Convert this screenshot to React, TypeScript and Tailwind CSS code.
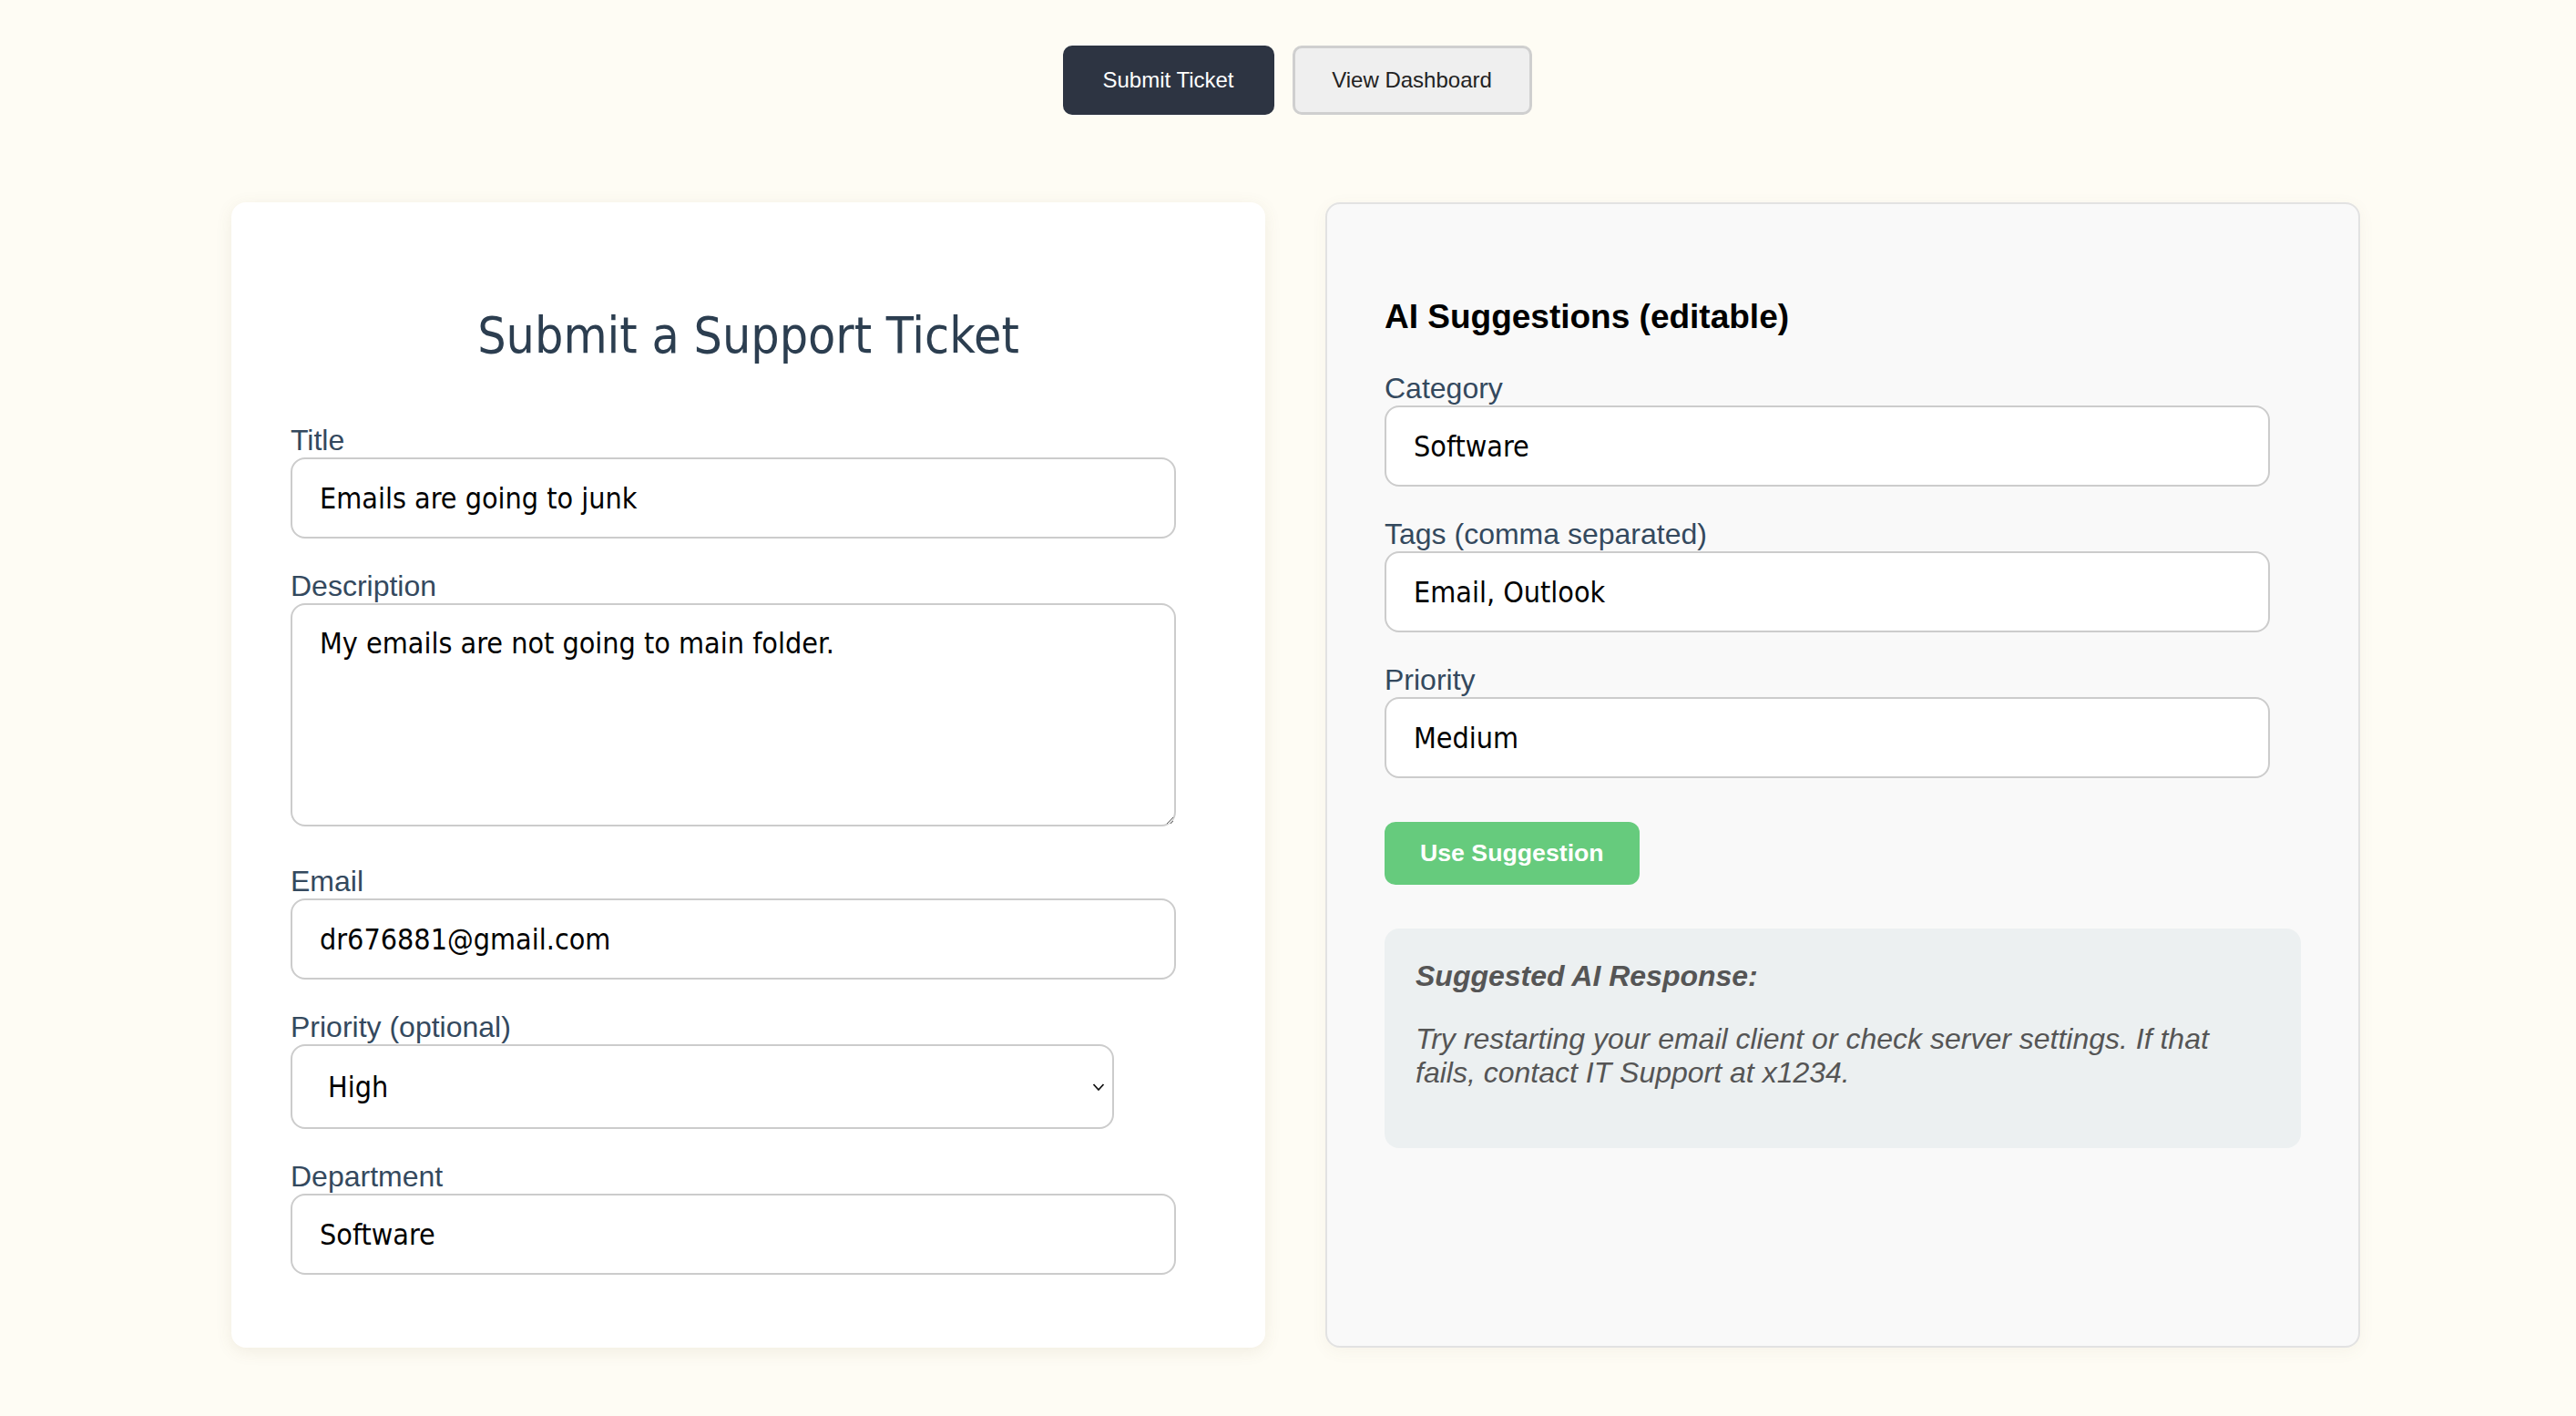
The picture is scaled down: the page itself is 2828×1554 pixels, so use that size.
const sans = "font-['Liberation_Sans',Arial,Helvetica,sans-serif]";
const tahoma = "font-['DejaVu_Sans_Condensed','DejaVu_Sans',Verdana,sans-serif] [font-stretch:condensed]";

function Label({ children }: { children: React.ReactNode }) {
  return (
    <label className={`${sans} block text-[32px] leading-[37px] text-[#34495e]`}>
      {children}
    </label>
  );
}

function TextInput({ value, className = "" }: { value: string; className?: string }) {
  return (
    <input
      readOnly
      value={value}
      className={`${tahoma} block w-[972px] h-[89px] px-[30px] border-2 border-[#cccccc] rounded-[16px] bg-white text-[32px] text-black outline-none ${className}`}
    />
  );
}

export default function App() {
  return (
    <div className="min-h-screen bg-[#fefcf4] pb-[76px]">
      {/* top nav */}
      <div className={`${sans} flex justify-center gap-[20px] pt-[50px] pl-[20px]`}>
        <button className="w-[232px] h-[76px] rounded-[10px] bg-[#2d3442] text-white text-[24px]">
          Submit Ticket
        </button>
        <button className="w-[263px] h-[76px] rounded-[10px] bg-[#efefef] border-[3px] border-[#cfcfcf] text-[#222] text-[24px]">
          View Dashboard
        </button>
      </div>

      <div className="flex items-stretch gap-[66px] pl-[254px] mt-[96px]">
        {/* ticket form */}
        <div className="w-[1135px] bg-white rounded-[16px] shadow-[0_4px_18px_rgba(120,100,60,0.10)] pt-[113px] pb-[80px] px-[65px]">
          <h2 className={`${tahoma} text-center text-[55px] leading-[67px] font-normal text-[#2c3e50] mb-[63px]`}>
            Submit a Support Ticket
          </h2>

          <Label>Title</Label>
          <TextInput value="Emails are going to junk" />

          <div className="mt-[34px]">
            <Label>Description</Label>
            <textarea
              readOnly
              value="My emails are not going to main folder."
              className={`${tahoma} block w-[972px] h-[245px] pt-[24px] px-[30px] border-2 border-[#cccccc] rounded-[16px] bg-white text-[32px] leading-[37px] text-black outline-none resize-y`}
            />
          </div>

          <div className="mt-[42px]">
            <Label>Email</Label>
            <TextInput value="dr676881@gmail.com" />
          </div>

          <div className="mt-[34px]">
            <Label>Priority (optional)</Label>
            <div className="relative w-[904px]">
              <select
                defaultValue="High"
                className={`${tahoma} block appearance-none w-[904px] h-[93px] pl-[39px] pr-[40px] border-2 border-[#cccccc] rounded-[16px] bg-white text-[32px] text-black outline-none`}
              >
                <option>Low</option>
                <option>Medium</option>
                <option>High</option>
              </select>
              <svg
                className="absolute right-[10px] top-[42px] pointer-events-none"
                width="14"
                height="10"
                viewBox="0 0 14 10"
                fill="none"
              >
                <path d="M1.5 2 L7 8 L12.5 2" stroke="#111" strokeWidth="1.8" />
              </svg>
            </div>
          </div>

          <div className="mt-[34px]">
            <Label>Department</Label>
            <TextInput value="Software" />
          </div>
        </div>

        {/* AI suggestions */}
        <div className="w-[1136px] bg-[#f9f9f9] border-2 border-[#e2e2e2] rounded-[16px] shadow-[0_4px_18px_rgba(120,100,60,0.06)] pt-[103px] px-[63px]">
          <h3 className={`${sans} text-[37px] leading-[42px] font-bold text-black mb-[39px]`}>
            AI Suggestions (editable)
          </h3>

          <Label>Category</Label>
          <TextInput value="Software" />

          <div className="mt-[34px]">
            <Label>Tags (comma separated)</Label>
            <TextInput value="Email, Outlook" />
          </div>

          <div className="mt-[34px]">
            <Label>Priority</Label>
            <TextInput value="Medium" />
          </div>

          <button
            className={`${sans} mt-[48px] h-[69px] px-[39px] rounded-[12px] bg-[#66cb7d] text-white font-bold text-[26.7px]`}
          >
            Use Suggestion
          </button>

          <div className={`${sans} mt-[48px] w-full bg-[#ecf0f1] rounded-[16px] px-[34px] pt-[34px] pb-[64px] text-[#555555]`}>
            <p className="text-[32px] leading-[37px] font-bold italic mb-[32px]">Suggested AI Response:</p>
            <p className="text-[32px] leading-[37px] italic">
              Try restarting your email client or check server settings. If that fails, contact IT Support at
              x1234.
            </p>
          </div>
        </div>
      </div>
    </div>
  );
}
